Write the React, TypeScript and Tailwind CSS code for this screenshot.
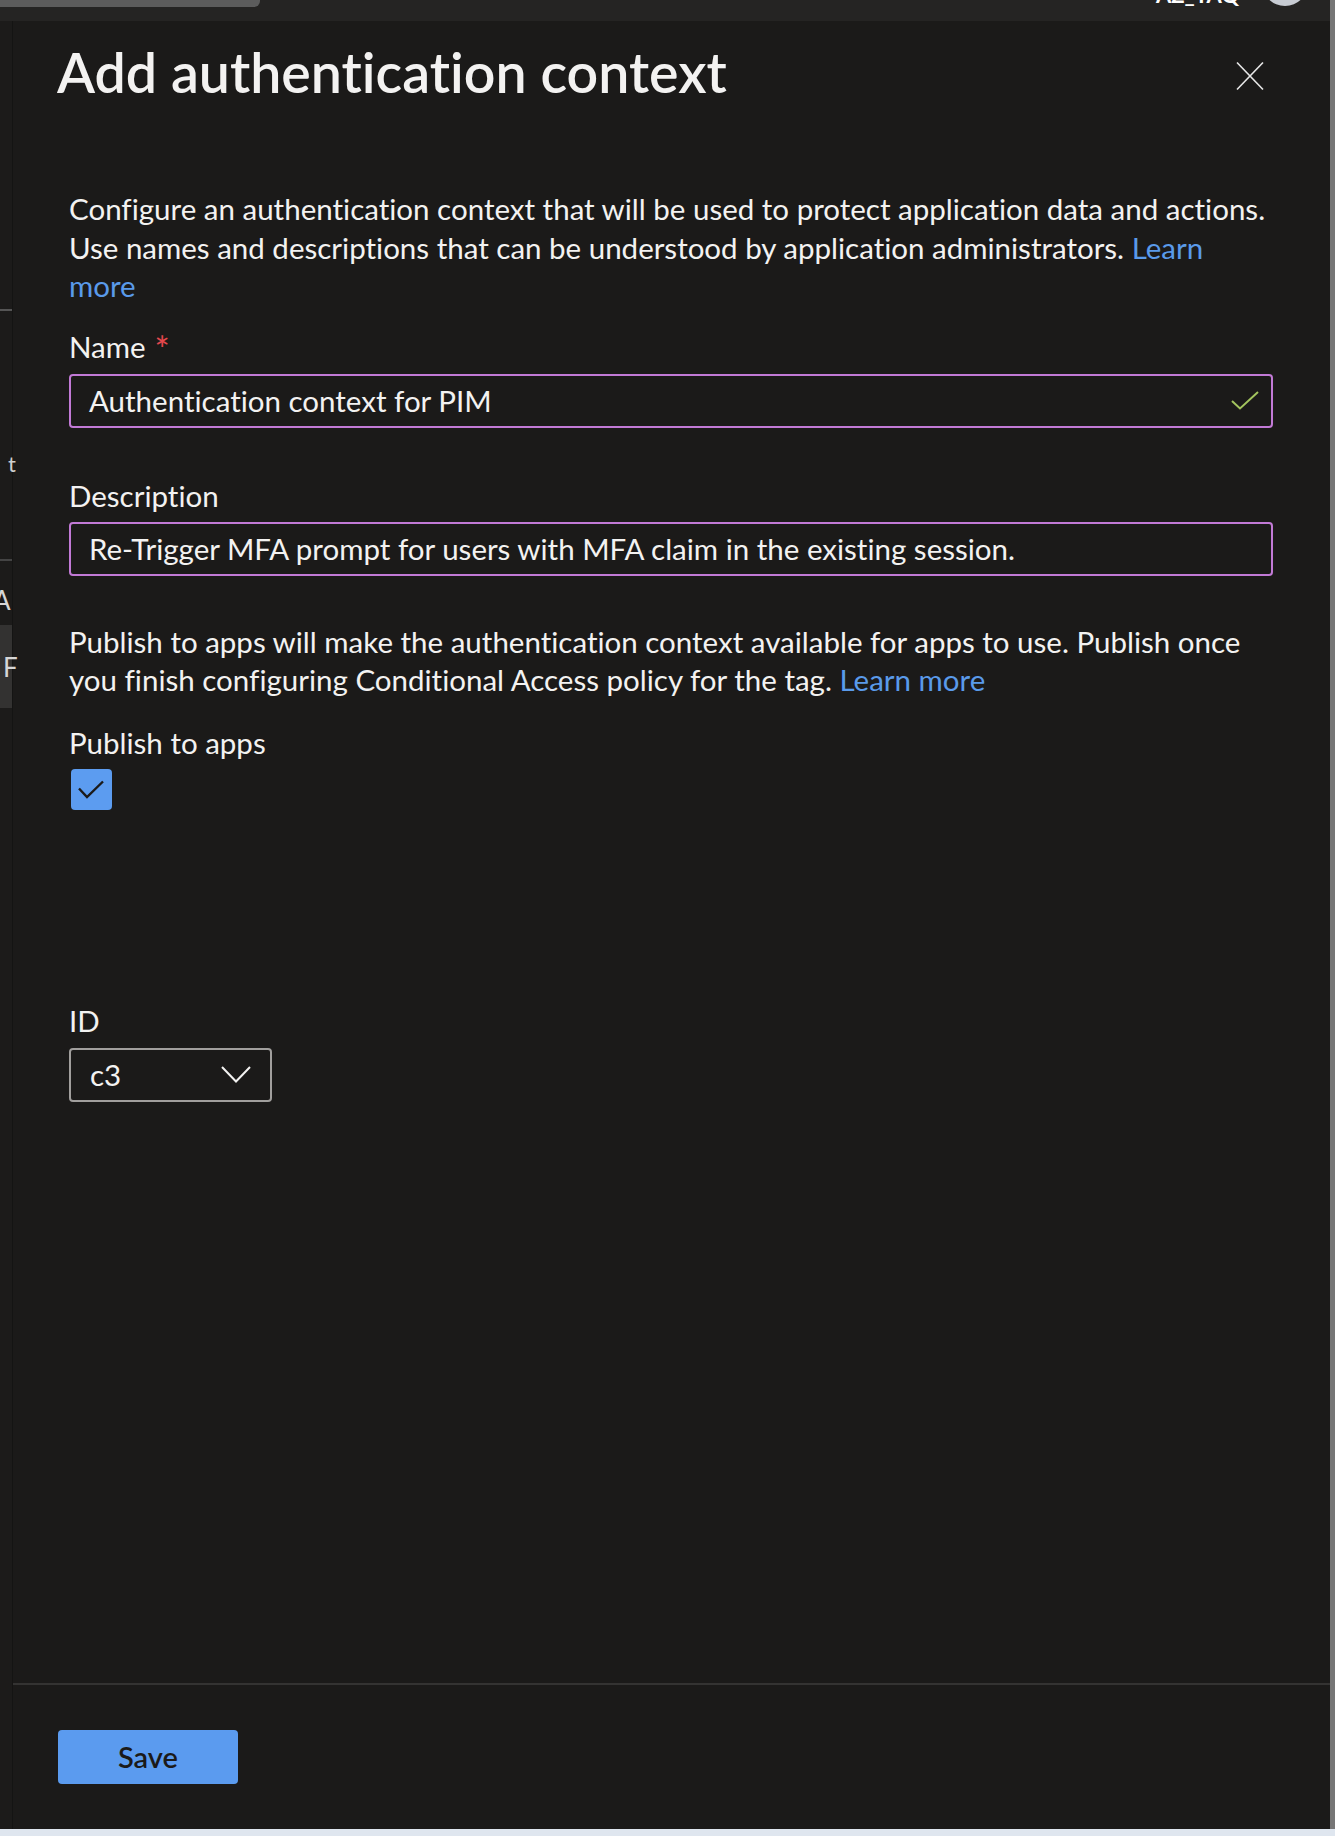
const font = { fontFamily: "Lato, 'Open Sans', sans-serif" };

function LeftStrip() {
  // slice of the page behind the blade
  return (
    <div className="flex w-[13px] flex-col border-r border-[#141413] bg-[#1c1b1a] leading-none text-[#d6d6d6]">
      <div className="mt-[288px] h-[2px] w-[12px] bg-[#555]" />
      <div className="mt-[142px] pl-[8px] text-[22px] text-[#cfcfcf]">t</div>
      <div className="mt-[84px] h-[2px] w-[12px] bg-[#444]" />
      <div className="mt-[26px] -ml-[7px] text-[26px]">A</div>
      <div className="mt-[12px] flex h-[83px] w-[12px] items-center bg-[#333231] pl-[3px] text-[26px]">F</div>
    </div>
  );
}

function GreenCheck() {
  return (
    <svg width="28" height="19" viewBox="0 0 28 19" fill="none" className="text-[#a3c45e]">
      <polyline points="1,10 9,17.5 27,1" stroke="currentColor" strokeWidth="2" />
    </svg>
  );
}

function Field({ label, required, value, valid }: { label: string; required?: boolean; value: string; valid?: boolean }) {
  return (
    <div>
      <div className="pt-[3px] text-[29.5px] leading-[38px] text-[#f3f2f1]">
        {label}
        {required && <span className="ml-[9px] align-[-5px] text-[36px] leading-none text-[#e5484d]">*</span>}
      </div>
      <div className="mt-[7px] flex h-[54px] items-center justify-between rounded-[4px] border-2 border-[#c27ad6] pl-[18px] pr-[12px]">
        <span className="pt-[2px] text-[29.5px] text-[#f3f2f1]">{value}</span>
        {valid && <GreenCheck />}
      </div>
    </div>
  );
}

export default function App() {
  return (
    <div
      className="flex h-[1836px] w-[1335px] flex-col overflow-hidden bg-[#1b1a19] [font-variant-ligatures:none]"
      style={font}
    >
      <div className="flex flex-1">
        <div className="flex flex-1 flex-col">
          <div className="flex h-[21px] items-start overflow-hidden bg-[#252423]">
            <div className="h-[7px] w-[260px] rounded-br-[6px] bg-[#5c5c5c]" />
            <div className="flex-1" />
            <div className="-mt-[17px] text-[22px] font-bold leading-[24px] text-white">AZ_TAQ</div>
            <div className="-mt-[40px] ml-[23px] mr-[22px] h-[46px] w-[46px] rounded-full bg-[#c8ccd3]" />
          </div>
          <div className="flex flex-1">
            <LeftStrip />
            <div className="flex flex-1 flex-col">
              <div className="flex flex-1 flex-col">
                <div className="flex items-start justify-between pl-[44px] pr-[66px] pt-[19px]">
                  <h1 className="text-[55.5px] font-semibold leading-[64px] text-[#f3f2f1]">Add authentication context</h1>
                  <svg width="28" height="30" viewBox="0 0 28 30" fill="none" className="mt-[21px] text-[#e8e8e8]">
                    <line x1="1" y1="1.5" x2="27" y2="28.5" stroke="currentColor" strokeWidth="1.6" />
                    <line x1="27" y1="1.5" x2="1" y2="28.5" stroke="currentColor" strokeWidth="1.6" />
                  </svg>
                </div>
                <div className="pl-[56px] pr-[57px]">
                  <p className="mt-[86px] text-[29.5px] leading-[38.5px] text-[#f3f2f1]">
                    Configure an authentication context that will be used to protect application data and actions.
                    <br />
                    Use names and descriptions that can be understood by application administrators.{" "}
                    <span className="text-[#5a9aea]">Learn</span>
                    <br />
                    <span className="text-[#5a9aea]">more</span>
                  </p>
                  <div className="mt-[19px]">
                    <Field label="Name" required value="Authentication context for PIM" valid />
                  </div>
                  <div className="mt-[46px]">
                    <Field label="Description" value="Re-Trigger MFA prompt for users with MFA claim in the existing session." />
                  </div>
                  <p className="mt-[47px] text-[29.5px] leading-[38.5px] text-[#f3f2f1]">
                    Publish to apps will make the authentication context available for apps to use. Publish once
                    <br />
                    you finish configuring Conditional Access policy for the tag.{" "}
                    <span className="text-[#5a9aea]">Learn more</span>
                  </p>
                  <div className="mt-[24px] text-[29.5px] leading-[38px] text-[#f3f2f1]">Publish to apps</div>
                  <div className="ml-[2px] mt-[7px] h-[41px] w-[41px] rounded-[4px] bg-[#5c9cf0]">
                    <svg width="41" height="41" viewBox="0 0 41 41" fill="none">
                      <polyline points="8,19.5 16,28 32,12.5" stroke="#1b1a19" strokeWidth="2.4" />
                    </svg>
                  </div>
                  <div className="mt-[192px] text-[29.5px] leading-[38px] text-[#f3f2f1]">ID</div>
                  <div className="mt-[8px] flex h-[54px] w-[203px] items-center justify-between rounded-[4px] border-2 border-[#a19f9d] pl-[19px] pr-[19px]">
                    <span className="pt-[2px] text-[29.5px] text-[#f3f2f1]">c3</span>
                    <svg width="30" height="17" viewBox="0 0 30 17" fill="none">
                      <polyline points="1,1 15,15.5 29,1" stroke="#f3f2f1" strokeWidth="2" />
                    </svg>
                  </div>
                </div>
              </div>
              <div className="h-[146px] border-t-2 border-[#343332] pl-[45px] pt-[45px]">
                <button className="h-[54px] w-[180px] rounded-[4px] bg-[#5b9bef] text-[29px] font-semibold text-[#1b1a19]">
                  Save
                </button>
              </div>
            </div>
          </div>
        </div>
        <div className="w-[5px] bg-[#767676]" />
      </div>
      <div className="h-[7px] bg-[#dfe6ef]" />
    </div>
  );
}
